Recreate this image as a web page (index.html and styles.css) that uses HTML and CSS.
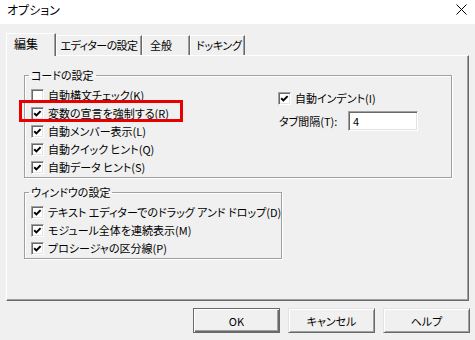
FILE: index.html
```html
<!DOCTYPE html>
<html lang="ja">
<head>
<meta charset="utf-8">
<title>オプション</title>
<link rel="stylesheet" href="styles.css">
</head>
<body>
<div class="titlebar">
  <span class="title">オプション</span>
  <svg class="close" width="11" height="11" viewBox="0 0 11 11"><path d="M0.5 0.5L10.5 10.5M10.5 0.5L0.5 10.5" stroke="#000" stroke-width="1" fill="none"/></svg>
</div>
<div class="dialog">
  <div class="tabs">
    <div class="tab active t1">編集</div>
    <div class="tab t2">エディターの設定</div>
    <div class="tab t3">全般</div>
    <div class="tab t4">ドッキング</div>
  </div>
  <div class="panel">
    <fieldset class="group g1">
      <legend>コードの設定</legend>
      <div class="cols">
        <div class="col">
          <div class="row"><span class="cb"></span><span class="lbl">自動構文チェック(K)</span></div>
          <div class="row marked"><span class="cb"><svg width="13" height="13" viewBox="0 0 13 13"><path d="M3.2 6.2L5.4 8.4L9.6 4.1" stroke="#000" stroke-width="2" fill="none"/></svg></span><span class="lbl">変数の宣言を強制する(R)</span></div>
          <div class="row"><span class="cb"><svg width="13" height="13" viewBox="0 0 13 13"><path d="M3.2 6.2L5.4 8.4L9.6 4.1" stroke="#000" stroke-width="2" fill="none"/></svg></span><span class="lbl">自動メンバー表示(L)</span></div>
          <div class="row"><span class="cb"><svg width="13" height="13" viewBox="0 0 13 13"><path d="M3.2 6.2L5.4 8.4L9.6 4.1" stroke="#000" stroke-width="2" fill="none"/></svg></span><span class="lbl">自動クイック ヒント(Q)</span></div>
          <div class="row"><span class="cb"><svg width="13" height="13" viewBox="0 0 13 13"><path d="M3.2 6.2L5.4 8.4L9.6 4.1" stroke="#000" stroke-width="2" fill="none"/></svg></span><span class="lbl">自動データ ヒント(S)</span></div>
        </div>
        <div class="col right">
          <div class="row"><span class="cb"><svg width="13" height="13" viewBox="0 0 13 13"><path d="M3.2 6.2L5.4 8.4L9.6 4.1" stroke="#000" stroke-width="2" fill="none"/></svg></span><span class="lbl">自動インデント(I)</span></div>
          <div class="field"><span class="flabel">タブ間隔(T):</span><span class="input">4</span></div>
        </div>
      </div>
    </fieldset>
    <fieldset class="group g2">
      <legend>ウィンドウの設定</legend>
      <div class="row"><span class="cb"><svg width="13" height="13" viewBox="0 0 13 13"><path d="M3.2 6.2L5.4 8.4L9.6 4.1" stroke="#000" stroke-width="2" fill="none"/></svg></span><span class="lbl">テキスト エディターでのドラッグ アンド ドロップ(D)</span></div>
      <div class="row"><span class="cb"><svg width="13" height="13" viewBox="0 0 13 13"><path d="M3.2 6.2L5.4 8.4L9.6 4.1" stroke="#000" stroke-width="2" fill="none"/></svg></span><span class="lbl">モジュール全体を連続表示(M)</span></div>
      <div class="row"><span class="cb"><svg width="13" height="13" viewBox="0 0 13 13"><path d="M3.2 6.2L5.4 8.4L9.6 4.1" stroke="#000" stroke-width="2" fill="none"/></svg></span><span class="lbl">プロシージャの区分線(P)</span></div>
    </fieldset>
  </div>
  <div class="buttons">
    <div class="btn default">OK</div>
    <div class="btn">キャンセル</div>
    <div class="btn">ヘルプ</div>
  </div>
</div>
</body>
</html>
```
FILE: styles.css
```css
* { box-sizing: border-box; }
body {
  margin: 0;
  width: 475px;
  height: 340px;
  overflow: hidden;
  background: #f0f0f0;
  color: #000;
  font-family: "Noto Sans CJK JP", "Noto Sans", sans-serif;
  font-size: 11px;
  font-feature-settings: "palt";
}
.titlebar {
  height: 24px;
  background: #fff;
  display: flex;
  justify-content: space-between;
  align-items: flex-start;
  padding: 3px 8px 0 7px;
  font-size: 12px;
}
.title { line-height: 14px; }
.close { margin-top: 1px; }
.dialog { padding: 9px 6px 0 6px; }
.tabs {
  display: flex;
  align-items: flex-end;
  height: 22px;
}
.tab {
  height: 20px;
  line-height: 18px;
  padding-left: 6px;
  white-space: nowrap;
  background: #f0f0f0;
  border-top: 1px solid #fff;
  border-left: 1px solid #fff;
  border-right: 1px solid #696969;
  box-shadow: inset -1px 0 #a0a0a0;
}
.tab.active {
  position: relative;
  z-index: 1;
  height: 23px;
  margin-bottom: -1px;
  line-height: 20px;
  padding-left: 7px;
  font-size: 12px;
}
.t1 { width: 50px; }
.t2 { width: 86px; padding-left: 0; text-align: center; letter-spacing: -0.6px; }
.t3 { width: 48px; padding-left: 7px; }
.t4 { width: 55px; padding-left: 5px; letter-spacing: -0.3px; }
.panel {
  height: 246px;
  border-top: 1px solid #fff;
  border-left: 1px solid #fff;
  border-right: 1px solid #696969;
  border-bottom: 1px solid #696969;
  box-shadow: inset -1px -1px #a0a0a0;
  padding: 12px 0 0 17px;
}
.group {
  margin: 0;
  padding: 4px 0 1px 6px;
  border: 1px solid #a0a0a0;
  box-shadow: inset 1px 1px #fff, 1px 1px #fff;
}
.group legend {
  padding: 0 2px;
  margin-left: -2px;
  height: 14px;
  line-height: 14px;
}
.g1 { width: 428px; }
.g2 { width: 258px; margin-top: 7px; }
.cols {
  display: grid;
  grid-template-columns: 247px auto;
}
.right { padding-top: 3px; }
.row {
  display: flex;
  align-items: center;
  height: 18px;
  white-space: nowrap;
}
.cb {
  flex: none;
  width: 13px;
  height: 13px;
  background: #fff;
  border: 1px solid;
  border-color: #a0a0a0 #fff #fff #a0a0a0;
  box-shadow: inset 1px 1px #696969, inset -1px -1px #e3e3e3;
  position: relative;
}
.cb svg {
  position: absolute;
  left: -1px;
  top: -1px;
}
.lbl { margin-left: 4px; line-height: 14px; }
.marked { position: relative; }
.marked::after {
  content: "";
  position: absolute;
  left: -12px;
  top: -4px;
  width: 158px;
  bottom: 0;
  border: 3px solid #e60000;
}
.field {
  display: flex;
  align-items: center;
  margin-top: 4px;
  margin-left: 1px;
}
.flabel { width: 69px; white-space: nowrap; }
.input {
  width: 70px;
  height: 20px;
  background: #fff;
  border: 1px solid;
  border-color: #a0a0a0 #fff #fff #a0a0a0;
  box-shadow: inset 1px 1px #696969, inset -1px -1px #e3e3e3;
  padding-left: 4px;
  line-height: 18px;
}
.buttons {
  display: flex;
  justify-content: flex-end;
  gap: 8px;
  margin-top: 7px;
  margin-right: -1px;
}
.btn {
  width: 87px;
  height: 25px;
  display: flex;
  align-items: center;
  justify-content: center;
  background: #f0f0f0;
  border: 1px solid;
  border-color: #e3e3e3 #696969 #696969 #e3e3e3;
  box-shadow: inset 1px 1px #fff, inset -1px -1px #a0a0a0;
}
.btn.default {
  border-color: #696969;
  box-shadow: inset 1px 1px #fff, inset -1px -1px #696969, inset -2px -2px #a0a0a0;
}
```
